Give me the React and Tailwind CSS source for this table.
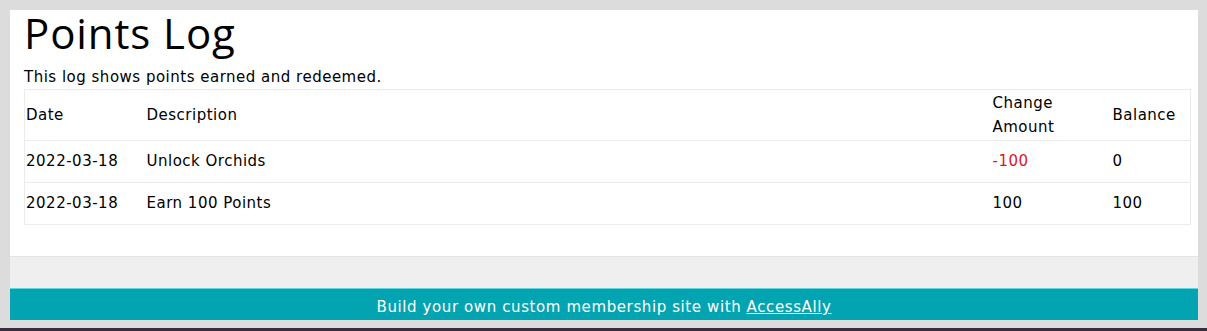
export default function App() {
  const font = { fontFamily: '"DejaVu Sans", "Open Sans", sans-serif' };
  return (
    <div className="w-[1207px] h-[331px] bg-[#dcdcdc] flex flex-col overflow-hidden tracking-[0.5px]" style={font}>
      <div className="flex-1 flex flex-col pl-[10px] pr-[9px] pt-[10px]">
        <div className="bg-white h-[247px] pl-[14px] pr-[7px] border-b border-[#e4e4e4]">
          <h1 className="text-[42px] leading-[46px] text-black tracking-[0.9px] font-['Open_Sans',sans-serif]">Points Log</h1>
          <p className="text-[15px] leading-[22px] text-black mt-[10px]">This log shows points earned and redeemed.</p>
          <table className="w-full border border-[#ebebeb] border-collapse text-[15px] text-black mt-[1px]">
            <tbody>
              <tr className="h-[51px] border-b border-[#ebebeb]">
                <td className="w-[120px] pl-[1px] pr-[2px] leading-[24px]">Date</td>
                <td className="px-[2px] leading-[24px]">Description</td>
                <td className="w-[120px] px-[2px] leading-[24px]">Change<br />Amount</td>
                <td className="w-[80px] px-[2px] leading-[24px]">Balance</td>
              </tr>
              <tr className="h-[42px] border-b border-[#ebebeb]">
                <td className="pl-[1px] pr-[2px]">2022-03-18</td>
                <td className="px-[2px]">Unlock Orchids</td>
                <td className="px-[2px] text-[#e2141e]">-100</td>
                <td className="px-[2px]">0</td>
              </tr>
              <tr className="h-[42px]">
                <td className="pl-[1px] pr-[2px]">2022-03-18</td>
                <td className="px-[2px]">Earn 100 Points</td>
                <td className="px-[2px]">100</td>
                <td className="px-[2px]">100</td>
              </tr>
            </tbody>
          </table>
        </div>
        <div className="bg-[#efefef] h-[31px]"></div>
        <div className="bg-[#03a4b1] h-[32px] flex items-end justify-center pb-[2px] border-t border-[#5fd5de]">
          <span className="text-white text-[15px] leading-[22px] tracking-[0.6px]">
            Build your own custom membership site with <span className="underline">AccessAlly</span>
          </span>
        </div>
      </div>
      <div className="h-[3px] bg-[#3a2b3e]"></div>
    </div>
  );
}
